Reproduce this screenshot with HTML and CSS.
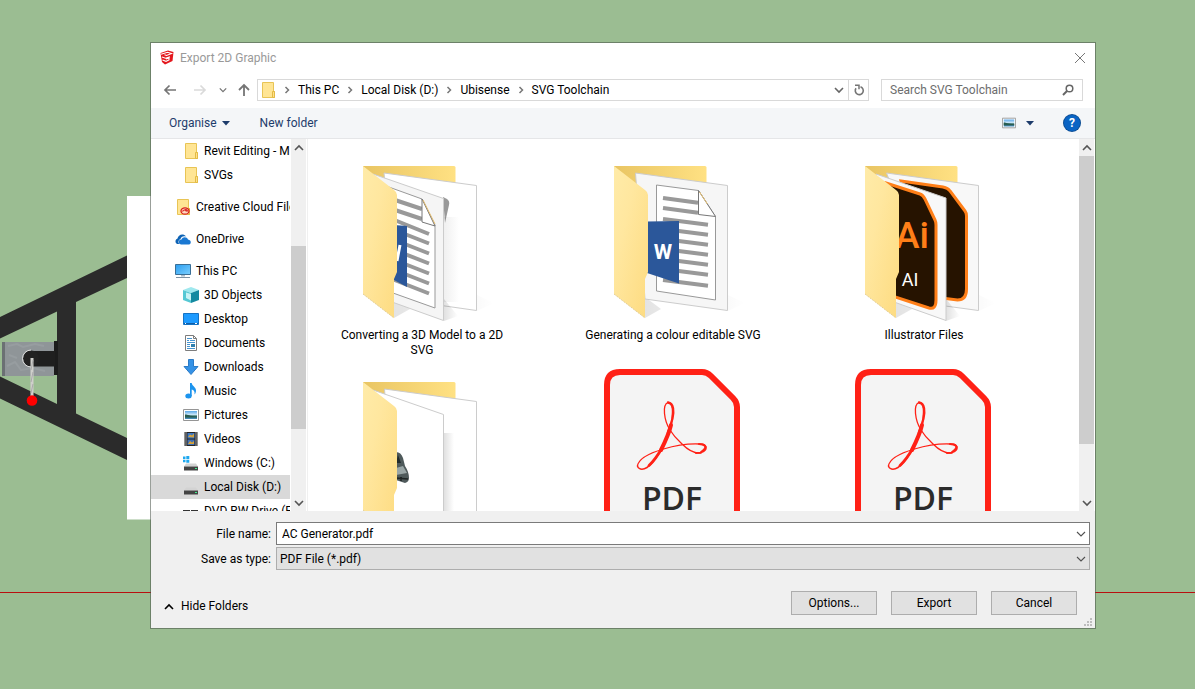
FILE: index.html
```html
<!DOCTYPE html>
<html lang="en">
<head>
<meta charset="utf-8">
<title>Export 2D Graphic</title>
<link rel="stylesheet" href="styles.css">
</head>
<body>
<svg class="defs" aria-hidden="true">
  <defs>
    <linearGradient id="gFront" x1="0" y1="0" x2="1" y2="1"><stop offset="0" stop-color="#ffeba8"/><stop offset=".35" stop-color="#ffe79f"/><stop offset="1" stop-color="#fddb80"/></linearGradient>
    <linearGradient id="gBack" x1="0" y1="0" x2="1" y2="0"><stop offset="0" stop-color="#e9c563"/><stop offset="1" stop-color="#ffe183"/></linearGradient>
    <linearGradient id="gShade" x1="0" y1="0" x2="1" y2="0"><stop offset="0" stop-color="#000" stop-opacity=".2"/><stop offset="1" stop-color="#000" stop-opacity="0"/></linearGradient>
    <linearGradient id="gScreen" x1="0" y1="0" x2="1" y2="1"><stop offset="0" stop-color="#2a9df0"/><stop offset="1" stop-color="#7cd0ff"/></linearGradient>
    <linearGradient id="gSky" x1="0" y1="0" x2="0" y2="1"><stop offset="0" stop-color="#5aa7e8"/><stop offset=".5" stop-color="#d5ecfa"/><stop offset=".6" stop-color="#2f6a63"/><stop offset="1" stop-color="#4a8fc4"/></linearGradient>
    <symbol id="folder" viewBox="0 0 16 16"><path d="M2.5.5h11v9h1v6h-12z" fill="#ffe594" stroke="#e8c455"/><path d="M12.5 9.500h2v6h-2z" fill="#ffe08a" stroke="#e3bb45"/></symbol>
    <symbol id="picture" viewBox="0 0 16 16"><path d="M.5 2.500h15v11H.5z" fill="#fff" stroke="#959595"/><path d="M2 4h12v8H2z" fill="url(#gSky)"/><path d="M2 7.500c3 0 4 1.500 12 2v1H2z" fill="#285c50"/></symbol>
    <symbol id="drive" viewBox="0 0 16 16"><path d="M3 8.500h10l2 3H1z" fill="#d3d3d3"/><path d="M1 11.500h14v4H1z" fill="#444"/><path d="M12 13h2v1h-2z" fill="#3df08a"/></symbol>
    <symbol id="chev-r" viewBox="0 0 8 8"><path d="M2.500 1l3 3-3 3" fill="none" stroke="#777" stroke-width="1.500"/></symbol>
    <symbol id="chev-d" viewBox="0 0 10 10"><path d="M1 3l4 4 4-4" fill="none" stroke="currentColor" stroke-width="1.600"/></symbol>
    <symbol id="chev-thin" viewBox="0 0 10 10"><path d="M1 3l4 4 4-4" fill="none" stroke="#505050" stroke-width="1.100"/></symbol>
    <symbol id="folder-back" viewBox="0 0 192 180"><path d="M37 19h91q1.500 0 1.500 1.500V100H37z" fill="url(#gBack)"/><path d="M151 148l17 8-17 8zM68 150l16 12-16 9z" fill="url(#gShade)" opacity=".55"/></symbol>
    <symbol id="folder-front" viewBox="0 0 192 180"><path d="M37 19l31 24q3 2 3 5v77l-3 7v39L37 147z" fill="url(#gFront)"/><path d="M37 147l31 24" stroke="#e3cf98" stroke-dasharray="2 1" fill="none"/></symbol>
    <symbol id="pdf" viewBox="0 0 192 180">
      <path d="M30 190V22Q30 9 43 9h82q5 0 9 4l22 22q4 4 4 9v147z" fill="#f4f4f4" stroke="#ff2116" stroke-width="6"/>
      <g fill="none" stroke="#ff2116" stroke-linecap="round">
        <path d="M91 39.500c-6 2-4 18 2 27.500 5 8 10 12 12 14 8 8 15 9.500 19 9M60.500 103c1-8 14-13.500 26-17 10-3 25-5.500 36-5 4 0 6 1 6.500 3" stroke-width="1.300"/>
        <path d="M91 39.500c5 0 6 8 2.500 25.500-3 10-5.500 15-9.500 22-6 11-10 15-14 17.500-5 3-9 1.500-9.500-1.500" stroke-width="1.500"/>
        <path d="M91 39.500c6 1 6 9 4.500 16-1.500 6-3 10-4.500 14" stroke-width="2.300"/>
        <path d="M94 62c-2 9-6 17-10 25" stroke-width="4"/>
        <path d="M85 85c-4 7-8 13-13 17.500" stroke-width="2.800"/>
        <path d="M122 81c6 0 8 3 6 6-2 2.500-5 3-9 3M128 83c1 2-1 4-4 6" stroke-width="2"/>
      </g>
      <text class="pdf-word" x="95" y="147" text-anchor="middle">PDF</text>
    </symbol>
  </defs>
</svg>

<svg class="scene" aria-hidden="true">
  <path d="M0 592.500h3000" stroke="#b80f0f"/>
  <path fill-rule="evenodd" d="M0 317l127-61.500V278l-51 24v111.500l51 24.500v22L0 398.500v-22L57 404v-92.500L0 338.500z" fill="#2b2b2b"/>
  <path d="M2 342h52v34H2z" fill="#8f9598"/>
  <path d="M2 342h3v34H2z" fill="#6b7073"/>
  <path d="M8 346l9-2 6 3 12-3 9 2M7 366l8-4 6 8 12-2 12 3M9 355l8 3" stroke="#979da0" stroke-width="2" fill="none"/>
  <path d="M54 341h4v34h-4z" fill="#1c1c1c"/>
  <path d="M31 351h24v15.500H31z" fill="#1f1f1f"/>
  <circle cx="31" cy="358.500" r="8" fill="#222"/>
  <path d="M31 350a8.500 8.500 0 0 0 0 17" stroke="#ddd" fill="none"/>
  <path d="M32 358v39" stroke="#cfcfcb" stroke-width="3"/>
  <path d="M33 360l-2 10M33 372l-2 10M33 384l-2 9" stroke="#aaa"/>
  <circle cx="32" cy="400.500" r="5.300" fill="#f00"/>
  <path d="M127 196h60v323.500h-60z" fill="#fff"/>
</svg>

<main class="dialog" role="dialog" aria-labelledby="dlg-title">
  <header class="titlebar">
    <svg class="i16" viewBox="0 0 16 16" aria-hidden="true"><path d="M1.500 3L9 .5l5.500 1.500-1 9L6 14.500 3 12z" fill="#e3171d"/><path d="M2 4.300l6.500-2 4 1.200-5 2-2-.8M3 7l3.500 1.200 4.500-1.500M3.500 10L7 11.300l3-1.300V8L7 9" stroke="#fff" stroke-width="1.100" fill="none"/></svg>
    <h1 class="title" id="dlg-title">Export 2D Graphic</h1>
    <button class="bare close" type="button" aria-label="Close"><svg width="12" height="12" viewBox="0 0 12 12"><path d="M1 1l10 10M11 1L1 11" stroke="#777" fill="none"/></svg></button>
  </header>

  <nav class="navrow" aria-label="Location">
    <div class="arrows">
      <button class="bare" type="button" aria-label="Back"><svg width="14" height="14" viewBox="0 0 14 14"><path d="M13 7H2M6.500 2.500L2 7l4.500 4.500" stroke="#757575" stroke-width="1.700" fill="none"/></svg></button>
      <button class="bare fwd" type="button" aria-label="Forward"><svg width="14" height="14" viewBox="0 0 14 14"><path d="M1 7h11M7.500 2.500L12 7l-4.500 4.500" stroke="#dadada" stroke-width="1.700" fill="none"/></svg></button>
      <button class="bare" type="button" aria-label="Recent locations"><svg width="8" height="8" viewBox="0 0 10 10"><use href="#chev-d"/></svg></button>
      <button class="bare up" type="button" aria-label="Up"><svg width="14" height="14" viewBox="0 0 14 14"><path d="M7 13V2M2 7l5-5 5 5" stroke="#757575" stroke-width="1.800" fill="none"/></svg></button>
    </div>
    <div class="address">
      <svg class="i16" aria-hidden="true"><use href="#folder"/></svg>
      <svg class="sep" aria-hidden="true"><use href="#chev-r"/></svg>
      <a href="#pc">This PC</a>
      <svg class="sep" aria-hidden="true"><use href="#chev-r"/></svg>
      <a href="#d">Local Disk (D:)</a>
      <svg class="sep" aria-hidden="true"><use href="#chev-r"/></svg>
      <a href="#ubisense">Ubisense</a>
      <svg class="sep" aria-hidden="true"><use href="#chev-r"/></svg>
      <a href="#toolchain">SVG Toolchain</a>
      <button class="bare drop" type="button" aria-label="Previous locations"><svg width="10" height="10"><use href="#chev-d"/></svg></button>
      <button class="bare refresh" type="button" aria-label="Refresh"><svg width="12" height="12" viewBox="0 0 12 12"><path d="M7.500 2.800A4 4 0 1 1 3 4.300" stroke="#757575" stroke-width="1.600" fill="none"/><path d="M2 1.300h4v4" stroke="#757575" stroke-width="1.500" fill="none"/></svg></button>
    </div>
    <div class="search">
      <input type="search" aria-label="Search SVG Toolchain" placeholder="Search SVG Toolchain">
      <svg width="12" height="12" viewBox="0 0 12 12" aria-hidden="true"><circle cx="7.500" cy="4.500" r="3.300" stroke="#666" stroke-width="1.500" fill="none"/><path d="M5 7L1 11" stroke="#666" stroke-width="1.900"/></svg>
    </div>
  </nav>

  <div class="toolbar">
    <button class="bare tool" type="button">Organise <svg width="8" height="5" viewBox="0 0 8 5"><path d="M0 0h8L4 4.500z" fill="#1d3c6b"/></svg></button>
    <button class="bare tool" type="button">New folder</button>
    <button class="bare tool view" type="button" aria-label="Change your view"><svg class="i14"><use href="#picture"/></svg><svg width="8" height="5" viewBox="0 0 8 5"><path d="M0 0h8L4 4.500z" fill="#1d3c6b"/></svg></button>
    <button class="help" type="button" aria-label="Help">?</button>
  </div>

  <div class="browser">
    <aside class="side">
      <ul class="tree">
        <li class="sub"><svg class="i16"><use href="#folder"/></svg>Revit Editing - MEP</li>
        <li class="sub"><svg class="i16"><use href="#folder"/></svg>SVGs</li>
        <li class="root"><svg class="i16" viewBox="0 0 16 16"><use href="#folder" width="16" height="16"/><g fill="none" stroke="#d8211d"><ellipse cx="10" cy="12" rx="4" ry="3.200" fill="#ffd9c0" stroke-width="1.300"/><path d="M7.500 12.500c1-2 3-2 4 0M9.500 11c1.500-1 3 0 3 1.500" stroke-width="1.200"/></g></svg>Creative Cloud Files</li>
        <li class="root"><svg class="i16" viewBox="0 0 16 16"><path d="M2 13a3 3 0 0 1 .5-5.500C3 4 8 1.500 11 5.500 8 4.500 6 6 5.500 8 3 9 3 12 4.500 13z" fill="#0e63b5"/><path d="M6 13.500a2.500 2.500 0 0 1 .5-5c1-3 5.500-3 6.500 0 3.500.5 3.500 4.500 1 5z" fill="#1a78d2"/></svg>OneDrive</li>
        <li class="root"><svg class="i16" viewBox="0 0 16 16"><path d="M.5 1.500h15v10H.5z" fill="url(#gScreen)" stroke="#3a6f96"/><path d="M6 12h4v1.500H6z" fill="#a9bccb"/><path d="M1 14.500h14" stroke="#7e93a4"/></svg>This PC</li>
        <li class="sub"><svg class="i16" viewBox="0 0 16 16"><path d="M0 3l8-3 8 3-8 3z" fill="#9fe8ee"/><path d="M0 3l8 3v10l-8-3z" fill="#55c8d4"/><path d="M16 3L8 6v10l8-3z" fill="#1489a0"/><path d="M3 5.500L8 7v6.500L3 11z" fill="#c9f3f5"/></svg>3D Objects</li>
        <li class="sub"><svg class="i16" viewBox="0 0 16 16"><path d="M.5 2.500h15v11H.5z" fill="#1e9bff" stroke="#1673c4"/><path d="M1 12.500h14" stroke="#0e5ea8"/><path d="M2 12.500h1M12 12.500h2" stroke="#fff"/></svg>Desktop</li>
        <li class="sub"><svg class="i16" viewBox="0 0 16 16"><path d="M2.500.5h8l3 3v12h-11z" fill="#fff" stroke="#7d7d7d"/><path d="M10.500.5v3h3" fill="none" stroke="#7d7d7d"/><path d="M4 5.500h2M7 5.500h5M4 3.500h5M4 7.500h8M4 9.500h3M4 11.500h3M4 13.500h8" stroke="#4795d1"/><path d="M8 9h4v3H8z" fill="#2f7fae"/></svg>Documents</li>
        <li class="sub"><svg class="i16" viewBox="0 0 16 16"><path d="M5.500.5h5v7h4.500L8 15.500 1 7.500h4.500z" fill="#3592e6" stroke="#2b7bc7"/></svg>Downloads</li>
        <li class="sub"><svg class="i16" viewBox="0 0 16 16"><ellipse cx="5.500" cy="13" rx="3.200" ry="2.500" fill="#1c94ee"/><path d="M7 0h1.700c.3 3 4.300 4 4.300 7.500 0 1.500-.5 3-1.500 4 .5-3-.8-4.500-2.800-5V13H7z" fill="#1c94ee"/></svg>Music</li>
        <li class="sub"><svg class="i16"><use href="#picture"/></svg>Pictures</li>
        <li class="sub"><svg class="i16" viewBox="0 0 16 16"><path d="M1.500 1h13v14h-13z" fill="#252525"/><path d="M3 1.500v13M13 1.500v13" stroke="#ddd" stroke-width="1.300" stroke-dasharray="1 1"/><path d="M4.500 2h7v5.500h-7z" fill="#3c79c6"/><path d="M4.500 8.500h7V14h-7z" fill="#3f6fb5"/><path d="M5 6l2-2.500 2 1 2-2v4zM5 13l2-3 2 1.500 2-1.500v3z" fill="#d6a23c"/></svg>Videos</li>
        <li class="sub"><svg class="i16" viewBox="0 0 16 16"><use href="#drive" width="16" height="16"/><path d="M0 1.500h2.500V4H0zM3.300 1h3v3h-3zM0 4.800h2.500v2.500H0zM3.300 4.800h3v3h-3z" fill="#1fa8ef"/></svg>Windows (C:)</li>
        <li class="sub selected"><svg class="i16"><use href="#drive"/></svg>Local Disk (D:)</li>
        <li class="sub"><svg class="i16" viewBox="0 0 16 16"><path d="M0 7h7v5H0zM8 7h7v3H8z" fill="#333"/><path d="M2 8.500h3" stroke="#fff"/></svg>DVD RW Drive (E:)</li>
      </ul>
      <div class="scroll">
        <svg width="10" height="10"><use href="#chev-d" class="flip"/></svg>
        <span class="thumb-a"></span>
        <svg width="10" height="10"><use href="#chev-d"/></svg>
      </div>
    </aside>

    <section class="files" aria-label="Files">
      <figure class="file">
        <svg class="art" viewBox="0 0 192 180">
          <use href="#folder-back"/>
          <path d="M58 26l92.500 12.500v125L70 152z" fill="#fff" stroke="#ccc"/>
          <path d="M117 50l4 2q3 2 2 6l-4 18z" fill="#999"/>
          <path d="M118 70h15v85h-15z" fill="url(#gShade)" opacity=".3"/>
          <path d="M118 152l14 17-14 5z" fill="url(#gShade)" opacity=".6"/>
          <path d="M47 27l70.500 24.500v122L66 155z" fill="#f5f5f5" stroke="#ccc"/>
          <path d="M60 39l36 13 13 26v83l-42-15z" fill="#fff" stroke="#999"/>
          <path d="M66 52l30 10M66 62l30 10M66 72l37 15M66 82l37 14.500M66 92l37 14.500M66 102l37 14.500M66 112l37 14.500M66 122l37 14.500M66 132l37 14.500" stroke="#999" stroke-width="4"/>
          <path d="M96 52l13 27-13-4z" fill="#fff" stroke="#777"/><path d="M97 53l12 24" stroke="#e5bf72"/>
          <path d="M68 78l13 1v61l-13-7z" fill="#2b579a"/><path d="M71 114l3-16" stroke="#fff" stroke-width="3"/>
          <use href="#folder-front"/>
        </svg>
        <figcaption>Converting a 3D Model to a 2D SVG</figcaption>
      </figure>
      <figure class="file">
        <svg class="art" viewBox="0 0 192 180">
          <use href="#folder-back"/>
          <path d="M58.500 26l92 12.500v125L68 152z" fill="#f6f6f6" stroke="#ccc"/>
          <path d="M79.500 38l42 5.500 17 26V153l-59-9z" fill="#fff" stroke="#999"/>
          <path d="M86 51l35 4.700M86 61l35 4.700M86 72l45 5.700M86 82l45 5.800M86 92l45 5.800M86 102l45 5.800M86 112l45 5.800M86 122l45 5.800M86 133l45 5.800" stroke="#999" stroke-width="4"/>
          <path d="M121.500 43.500l17 26-17-2z" fill="#fff" stroke="#777"/><path d="M122.500 45l8 12" stroke="#e5bf72"/>
          <path d="M70 74.500l32-.5v62.500L70 126z" fill="#2b579a"/>
          <text class="word-w" x="86" y="112" text-anchor="middle">W</text>
          <use href="#folder-front"/>
        </svg>
        <figcaption>Generating a colour editable SVG</figcaption>
      </figure>
      <figure class="file">
        <svg class="art" viewBox="0 0 192 180">
          <use href="#folder-back"/>
          <path d="M58.500 26l92 12.500v125L110 158z" fill="#f8f8f8" stroke="#ccc"/>
          <path d="M73 34l42 6q5 1 7 4l15 20q1.500 2 1.500 5v73q0 11-9 11l-24-3z" fill="#261300" stroke="#ff7f18" stroke-width="3"/>
          <path d="M118 152l14 17-14 5z" fill="url(#gShade)" opacity=".6"/>
          <path d="M48 27l70 24v122.500L66 155z" fill="#f8f8f8" stroke="#ccc"/>
          <path d="M58 36l34 11q3 1 5 5l10 21q1 2 1 5v75q0 10-7 8l-37-12z" fill="#261300" stroke="#ff7f18" stroke-width="3"/>
          <text class="ai-big" x="84" y="101" text-anchor="middle">Ai</text>
          <text class="ai-small" x="82" y="139" text-anchor="middle">AI</text>
          <use href="#folder-front"/>
        </svg>
        <figcaption>Illustrator Files</figcaption>
      </figure>
      <figure class="file">
        <svg class="art" viewBox="0 0 192 180">
          <use href="#folder-back"/>
          <path d="M58.500 26l92 12.500v125L68 152z" fill="#fff" stroke="#ccc"/>
          <path d="M118 70h10v95h-10z" fill="url(#gShade)" opacity=".6"/>
          <path d="M47 27l70.500 24.500v122L66 155z" fill="#fff" stroke="#ccc"/>
          <path d="M70 89q5 0 7 6l2 8q4 6 4 12 0 4-4 5l-9-3z" fill="#4f5a5b"/><path d="M70 105l7-2 4 7-11 2z" fill="#9aa6a6"/><path d="M72 92l3 8h-5z" fill="#222b2c"/><path d="M70 115l12 1M75 114v4" stroke="#1f2525" stroke-width="1.500"/>
          <use href="#folder-front"/>
        </svg>
      </figure>
      <figure class="file"><svg class="art" role="img" aria-label="PDF document"><use href="#pdf"/></svg></figure>
      <figure class="file"><svg class="art" role="img" aria-label="PDF document"><use href="#pdf"/></svg></figure>
    </section>
    <div class="scroll">
      <svg width="10" height="10"><use href="#chev-d" class="flip"/></svg>
      <span class="thumb-b"></span>
      <svg width="10" height="10"><use href="#chev-d"/></svg>
    </div>
  </div>

  <form class="footer">
    <div class="fields">
      <label for="fname">File name:</label>
      <div class="combo"><input id="fname" type="text" value="AC Generator.pdf"><svg width="10" height="10" aria-hidden="true"><use href="#chev-thin"/></svg></div>
      <label for="ftype">Save as type:</label>
      <div class="combo grey"><select id="ftype"><option>PDF File (*.pdf)</option></select><svg width="10" height="10" aria-hidden="true"><use href="#chev-thin"/></svg></div>
    </div>
    <div class="actions">
      <button class="bare hide" type="button"><svg width="10" height="10"><use href="#chev-d" class="flip"/></svg>Hide Folders</button>
      <button class="btn" type="button">Options...</button>
      <button class="btn" type="button">Export</button>
      <button class="btn" type="button">Cancel</button>
    </div>
    <svg class="grip" viewBox="0 0 8 8" aria-hidden="true"><path d="M6 0h2v2H6zM3 3h2v2H3zM6 3h2v2H6zM0 6h2v2H0zM3 6h2v2H3zM6 6h2v2H6z" fill="#bdbdbd"/></svg>
  </form>
</main>
</body>
</html>
```

FILE: styles.css
```css
* { box-sizing: border-box; }

body {
  margin: 0;
  height: 100vh;
  display: flex;
  padding: 42px 99px 60px 150px;
  overflow: hidden;
  background: #9bbd92;
  color: #000;
  font-family: Roboto, "Open Sans", sans-serif;
  font-size: 12px;
  line-height: 15px;
}

button, input, select { font: inherit; color: inherit; }
svg { flex: none; }
a { color: inherit; text-decoration: none; }

.defs { position: absolute; width: 0; height: 0; }
.scene { position: absolute; inset: 0; width: 100%; height: 100%; }
.i16 { width: 16px; height: 16px; }
.i14 { width: 14px; height: 14px; }
.flip { transform: rotate(180deg); transform-origin: 5px 5px; }

.bare {
  display: flex;
  align-items: center;
  padding: 0;
  border: 0;
  background: none;
}

.dialog {
  position: relative;
  flex: 1;
  min-width: 0;
  display: flex;
  flex-direction: column;
  border: 1px solid rgba(70, 80, 70, .55);
  background: #fff;
  background-clip: padding-box;
}

.titlebar {
  display: flex;
  align-items: center;
  gap: 5px;
  height: 30px;
  padding: 0 9px 0 8px;
}
.title { flex: 1; margin: 0; font-size: 12px; line-height: 15px; font-weight: 400; color: #999; }

.navrow {
  display: flex;
  align-items: center;
  gap: 12px;
  height: 35px;
  padding: 0 12px 2px;
}
.arrows { display: flex; align-items: center; gap: 12px; color: #757575; width: 82px; }
.fwd { margin-left: 4px; }
.up { margin-left: -2px; }
.address, .search {
  display: flex;
  align-items: center;
  height: 22px;
  border: 1px solid #d9d9d9;
}
.address { flex: 1; padding-left: 2px; gap: 7px; }
.address a, .search input { padding: 2px 0 0; }
.sep { width: 8px; height: 8px; }
.drop { margin-left: auto; color: #666; }
.address .refresh {
  align-self: stretch;
  justify-content: center;
  width: 20px;
  margin-left: -3px;
  border-left: 1px solid #d9d9d9;
}
.search { width: 202px; padding: 0 8px; }
.search input {
  flex: 1;
  min-width: 0;
  border: 0;
  outline: 0;
  background: none;
  appearance: none;
}
.search input::placeholder { color: #6d6d6d; opacity: 1; }

.toolbar {
  display: flex;
  align-items: center;
  gap: 30px;
  height: 31px;
  padding: 0 15px 0 18px;
  border-bottom: 1px solid #e5e6e8;
  background: #f4f6f8;
}
.tool { gap: 5px; color: #1d3c6b; }
.view { margin-left: auto; gap: 10px; }
.help {
  width: 16px;
  height: 16px;
  padding: 0;
  border: 0;
  border-radius: 50%;
  background: #0a64c4;
  box-shadow: 0 0 0 1px #0b4d94;
  color: #fff;
  font-weight: 700;
  line-height: 16px;
}

.browser { flex: 1; min-height: 0; display: flex; padding-right: 1px; }
.side { display: flex; width: 155px; }
.tree {
  flex: 1;
  min-width: 0;
  margin: 0;
  padding: 0;
  overflow: hidden;
  list-style: none;
  white-space: nowrap;
}
.tree li {
  display: flex;
  align-items: center;
  gap: 5px;
  height: 24px;
  margin-right: 1px;
  padding-left: 32px;
  overflow: hidden;
}
.tree .root { margin-top: 8px; padding-left: 24px; }
.tree .selected { background: #d9d9d9; }

.scroll {
  display: flex;
  flex-direction: column;
  align-items: center;
  width: 15px;
  padding: 4px 0 3px;
  background: #f0f0f0;
  color: #555;
}
.scroll svg:last-child { margin-top: auto; }
.thumb-a, .thumb-b { width: 100%; background: #cdcdcd; }
.thumb-a { flex: 0 0 50%; margin-top: 93px; }
.thumb-b { flex: 0 0 79%; margin-top: 3px; }

.files {
  flex: 1;
  min-width: 0;
  display: grid;
  grid-template-columns: repeat(auto-fill, 226px);
  grid-auto-rows: 210px;
  gap: 6px 25px;
  align-content: start;
  margin-left: 1px;
  padding: 8px 0 0 1px;
  border-left: 1px solid #f0f0f0;
  overflow: hidden;
}
.file { display: flex; flex-direction: column; align-items: center; gap: 1px; margin: 0; }
.art { width: 192px; height: 180px; }
.file figcaption { width: 180px; text-align: center; }

.word-w { font: 700 21px Roboto, sans-serif; fill: #fff; }
.ai-big { font: 500 37px Roboto, sans-serif; fill: #ff7f18; }
.ai-small { font: 400 18px Roboto, sans-serif; fill: #fff; }
.pdf-word { font: 600 32px "Open Sans", sans-serif; fill: #2b2b2b; }

.footer { position: relative; padding: 11px 5px 13px; background: #f0f0f0; }
.fields {
  display: grid;
  grid-template-columns: 115px 1fr;
  align-items: center;
  gap: 2px 5px;
}
.fields label { padding-top: 1px; text-align: right; }
.combo {
  display: flex;
  align-items: center;
  height: 23px;
  padding: 0 3px 0 5px;
  border: 1px solid #7a7a7a;
  background: #fff;
}
.combo.grey { padding-left: 3px; border-color: #adadad; background: #e1e1e1; }
.combo input, .combo select {
  flex: 1;
  min-width: 0;
  padding: 1px 0 0;
  border: 0;
  outline: 0;
  background: none;
  appearance: none;
}

.actions { display: flex; align-items: center; gap: 14px; padding: 21px 13px 0 8px; }
.hide { margin-right: auto; padding-top: 7px; gap: 7px; }
.btn {
  width: 86px;
  height: 24px;
  padding: 0;
  border: 1px solid #adadad;
  background: #e1e1e1;
}
.grip { position: absolute; right: 3px; bottom: 2px; width: 8px; height: 8px; }
```
